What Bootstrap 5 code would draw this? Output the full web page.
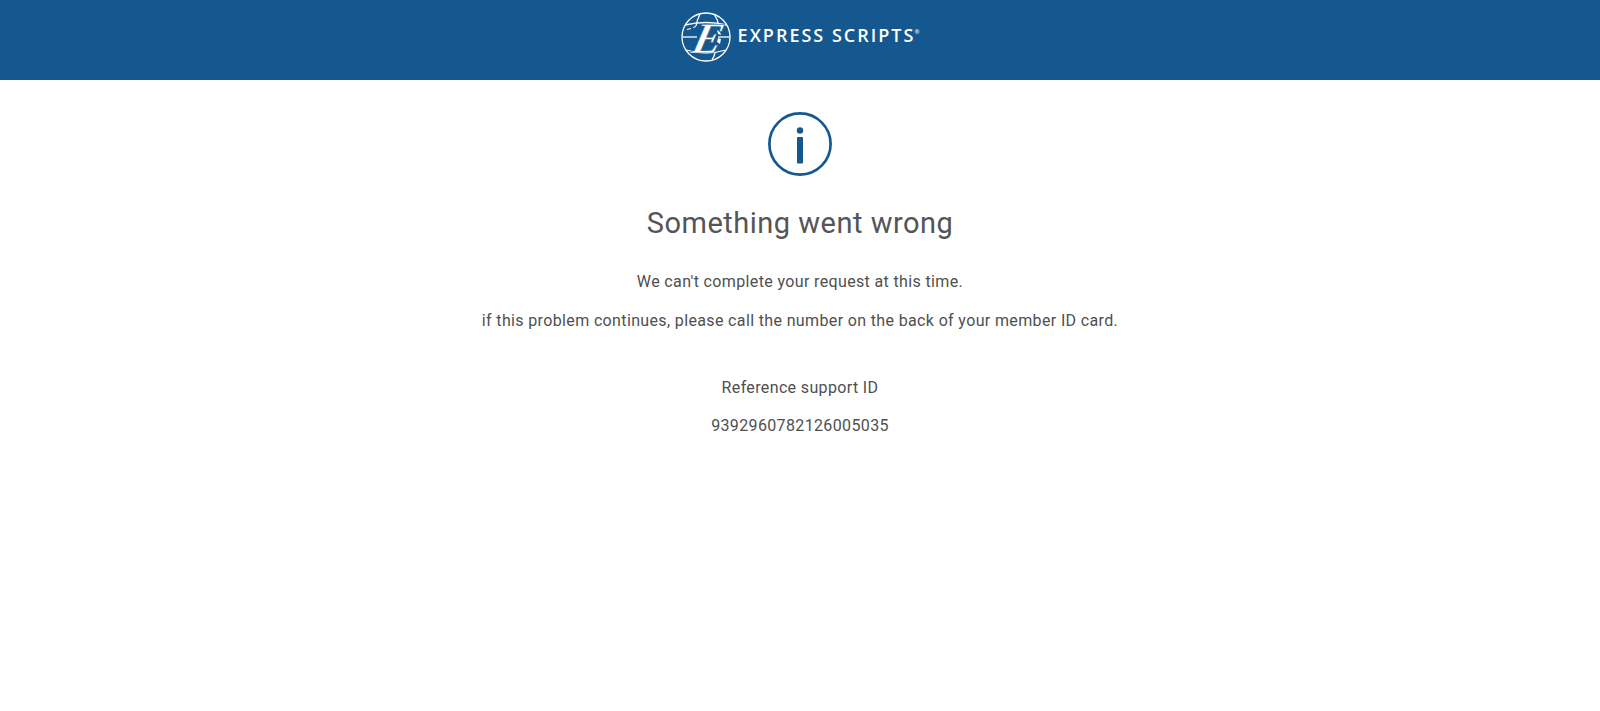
<!DOCTYPE html>
<html lang="en">
<head>
  <meta charset="UTF-8" />
  <meta name="viewport" content="width=device-width, initial-scale=1.0"/>
  <title>Express Scripts</title>
  <link href="https://cdn.jsdelivr.net/npm/bootstrap@5.3.0/dist/css/bootstrap.min.css" rel="stylesheet"/>
  <style>
    body {
      font-family: Roboto, "Liberation Sans", sans-serif;
      color: #4f4f51;
      background: #fff;
    }
    .site-header {
      height: 80px;
      background-color: #14588f;
      padding-top: 12px;
    }
    .brand-name {
      font-family: "Open Sans", "Liberation Sans", sans-serif;
      font-size: 18px;
      font-weight: 600;
      letter-spacing: 2px;
      line-height: 50px;
      color: #fff;
      margin-left: 7px;
      margin-top: -2px;
    }
    .brand-name sup {
      font-size: 6px;
      top: -8px;
      letter-spacing: 0;
      margin-left: -1px;
    }
    .error-box {
      padding-top: 32px;
    }
    .error-title {
      font-size: 29px;
      font-weight: 400;
      line-height: 34px;
      letter-spacing: .5px;
      color: #555557;
      margin: 30px 0 30px;
    }
    .error-box p {
      font-size: 16px;
      line-height: 24px;
      letter-spacing: .36px;
      margin-bottom: 14.5px;
    }
    .error-box p.gap-above {
      margin-top: 43px;
    }
  </style>
</head>
<body>

  <!-- Header -->
  <header class="site-header d-flex justify-content-center align-items-start">
    <svg width="50" height="50" viewBox="0 0 50 50" aria-hidden="true">
      <g fill="none" stroke="#fff" stroke-width="1.3">
        <circle cx="25" cy="25" r="24"/>
        <path d="M4 13 Q25 8 46 13"/>
        <path d="M1.5 25 H16"/>
        <path d="M37 25 H48.5"/>
        <path d="M5 38 Q25 44 45 38"/>
        <path d="M19 2 Q16 8 15 14"/>
        <path d="M33 2 Q37 8 38 14"/>
        <path d="M34 41 Q33 45 31 48"/>
      </g>
      <g fill="#fff">
        <path d="M6 17 l4 -1 v1 l-4 1z M12 15 l3 -1 v1 l-3 1z M36 18 l3 2 l1 3 l-3 -1z M37 26 l3 1 l-1 5 l-3 -2z"/>
      </g>
      <text x="25" y="41" text-anchor="middle" transform="translate(9 0) skewX(-14)" font-family="Liberation Serif, serif" font-style="italic" font-weight="700" font-size="44" fill="#fff" stroke="#14588f" stroke-width=".5">E</text>
    </svg>
    <div class="brand-name">EXPRESS SCRIPTS<sup>®</sup></div>
  </header>

  <!-- Error message -->
  <main class="error-box text-center">
    <svg class="d-block mx-auto" width="64" height="64" viewBox="0 0 64 64" aria-hidden="true">
      <circle cx="32" cy="32" r="30.6" fill="none" stroke="#14588f" stroke-width="2.7"/>
      <circle cx="32" cy="18.5" r="3.2" fill="#14588f"/>
      <rect x="29" y="25" width="6" height="26.5" rx="1" fill="#14588f"/>
    </svg>
    <h1 class="error-title">Something went wrong</h1>
    <p>We can't complete your request at this time.</p>
    <p>if this problem continues, please call the number on the back of your member ID card.</p>
    <p class="gap-above">Reference support ID</p>
    <p>9392960782126005035</p>
  </main>

</body>
</html>
